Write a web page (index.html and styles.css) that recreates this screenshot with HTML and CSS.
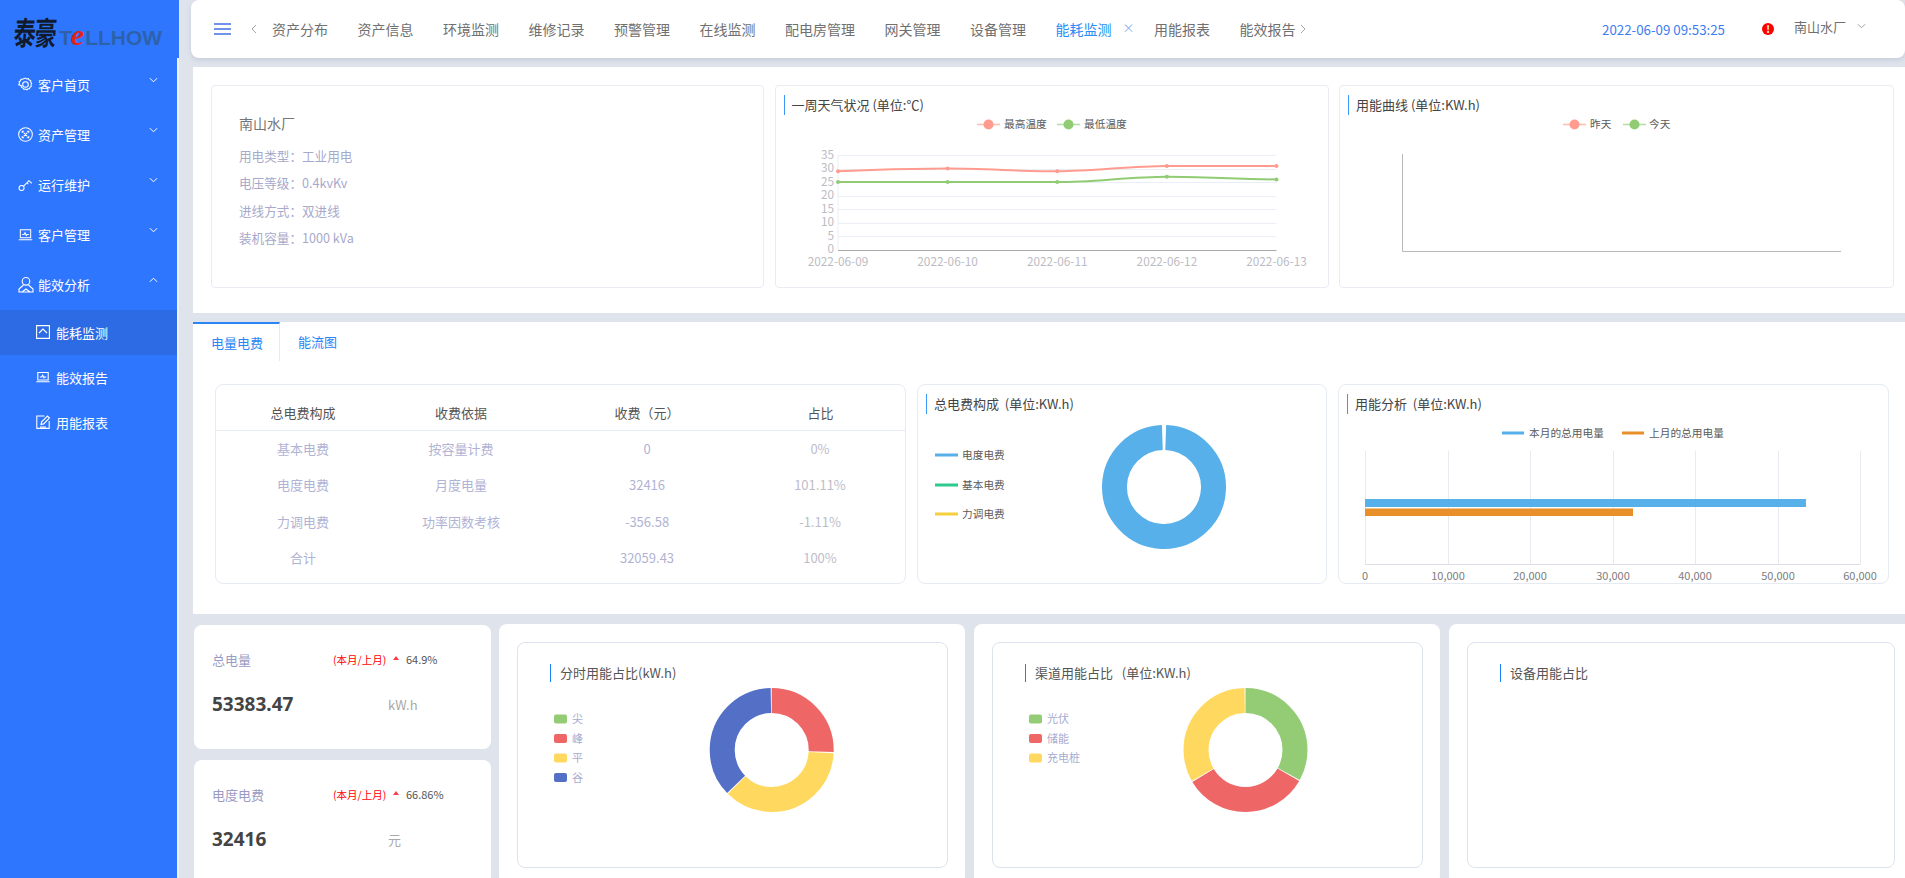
FILE: index.html
```html
<!DOCTYPE html>
<html lang="zh-CN">
<head>
<meta charset="utf-8">
<title>能耗监测</title>
<link rel="stylesheet" href="styles.css">
</head>
<body>
<aside class="side">
  <div class="logo">
    <span class="logo-cn"><span class="cn-a">泰</span><span class="cn-b">豪</span></span>
    <span class="logo-en">T<i>e</i>LLHOW</span>
  </div>
  <nav class="menu">
    <a class="menu-item"><svg class="ico" viewBox="0 0 16 16"><path d="M8 1.2l1.4.9 1.7-.3.9 1.4 1.6.6-.1 1.7 1.1 1.3-.8 1.5.4 1.6-1.4 1-.5 1.6-1.7.1-1.2 1.2-1.4-.9-1.7.3-.9-1.4-1.6-.6.1-1.7L.8 8.2l.8-1.5-.4-1.6 1.4-1 .5-1.6 1.7-.1z"/><circle cx="8" cy="8" r="3"/></svg><span>客户首页</span><svg class="chev" viewBox="0 0 10 6"><path d="M1 1l4 4 4-4"/></svg></a>
    <a class="menu-item"><svg class="ico" viewBox="0 0 16 16"><circle cx="8" cy="8" r="7.300"/><path d="M4.500 6.500V4.500h2M11.500 6.500V4.500h-2M4.500 9.500v2h2M11.500 9.500v2h-2M6 6l4 4M10 6l-4 4"/></svg><span>资产管理</span><svg class="chev" viewBox="0 0 10 6"><path d="M1 1l4 4 4-4"/></svg></a>
    <a class="menu-item"><svg class="ico" viewBox="0 0 16 16"><circle cx="3.800" cy="11.800" r="2.700"/><path d="M5.700 9.900l6-6 3 2.800M9.500 6.100l1.500 1.500"/></svg><span>运行维护</span><svg class="chev" viewBox="0 0 10 6"><path d="M1 1l4 4 4-4"/></svg></a>
    <a class="menu-item"><svg class="ico" viewBox="0 0 16 16"><path d="M2.500 3h11v8.500h-11zM.8 13.500h14.400M4.500 8h2l1-2 1.300 3 .9-1h1.800"/></svg><span>客户管理</span><svg class="chev" viewBox="0 0 10 6"><path d="M1 1l4 4 4-4"/></svg></a>
    <a class="menu-item"><svg class="ico ico-lg" viewBox="0 0 16 16"><circle cx="8" cy="4.800" r="3.800"/><path d="M5.500 8.500L1 12.500v3h14v-3l-4.500-4M4 15.500l4-3 4 3"/></svg><span>能效分析</span><svg class="chev" viewBox="0 0 10 6"><path d="M1 5l4-4 4 4"/></svg></a>
    <a class="sub-item is-active"><svg class="ico-sm" viewBox="0 0 14 14"><path d="M.6.600h12.800v12.800H.6zM3 8l4-4 4 4"/></svg><span>能耗监测</span></a>
    <a class="sub-item"><svg class="ico-sm" viewBox="0 0 14 14"><path d="M1.800 2.500h10.400v7.500H1.800zM.3 11.800h13.400M3.800 7h2l.9-1.800 1.200 2.600.8-.8h1.600"/></svg><span>能效报告</span></a>
    <a class="sub-item"><svg class="ico-sm" viewBox="0 0 14 14"><path d="M8.500 1H.8v12.400h12.400V6M5 9.500l.6-2.600L11.500 1l2 2-5.900 5.900zM4 12h6"/></svg><span>用能报表</span></a>
  </nav>
</aside>

<main class="content">
  <header class="topbar">
    <svg class="burger" viewBox="0 0 17 12"><path d="M0 1h17M0 6h17M0 11h17"/></svg>
    <svg class="nav-arrow" viewBox="0 0 6 10"><path d="M5 1L1 5l4 4"/></svg>
    <ul class="tabs-nav">
      <li>资产分布</li><li>资产信息</li><li>环境监测</li><li>维修记录</li><li>预警管理</li><li>在线监测</li><li>配电房管理</li><li>网关管理</li><li>设备管理</li>
      <li class="nav-on">能耗监测<span class="nav-x">×</span></li><li>用能报表</li><li>能效报告</li>
    </ul>
    <svg class="nav-arrow nav-arrow-r" viewBox="0 0 6 10"><path d="M1 1l4 4-4 4"/></svg>
    <div class="top-right">
      <time class="clock">2022-06-09 09:53:25</time>
      <span class="alert">!</span>
      <span class="plant">南山水厂</span>
      <svg class="plant-chev" viewBox="0 0 10 6"><path d="M1 1l4 4 4-4"/></svg>
    </div>
  </header>

  <section class="panel panel-top">
    <div class="card info">
      <h2>南山水厂</h2>
      <p>用电类型：工业用电</p>
      <p>电压等级：0.4kvKv</p>
      <p>进线方式：双进线</p>
      <p>装机容量：1000 kVa</p>
    </div>
    <div class="card">
      <h3 class="ctitle">一周天气状况 (单位:℃)</h3>
      <svg class="chart" width="552" height="172" viewBox="0 0 552 172">
        <g class="grid">
          <path d="M62 40.500h438.500M62 54.500h438.500M62 67.500h438.500M62 81.500h438.500M62 94.500h438.500M62 108.500h438.500M62 121.500h438.500M62 40v95"/>
        </g>
        <path class="axis" d="M62 135.500h438.500"/>
        <path class="ln hi" d="M201 9.500h23"/><circle class="dot-hi" cx="212.500" cy="9.500" r="5"/>
        <text class="lg" x="228" y="13">最高温度</text>
        <path class="ln lo" d="M281 9.500h23"/><circle class="dot-lo" cx="292.500" cy="9.500" r="5"/>
        <text class="lg" x="308" y="13">最低温度</text>
        <g class="ticks" text-anchor="end">
          <text x="58" y="43.500">35</text><text x="58" y="57">30</text><text x="58" y="70.500">25</text><text x="58" y="84">20</text><text x="58" y="97.500">15</text><text x="58" y="111">10</text><text x="58" y="124.500">5</text><text x="58" y="138">0</text>
        </g>
        <g class="ticks" text-anchor="middle">
          <text x="62" y="151">2022-06-09</text><text x="171.600" y="151">2022-06-10</text><text x="281.250" y="151">2022-06-11</text><text x="390.900" y="151">2022-06-12</text><text x="500.500" y="151">2022-06-13</text>
        </g>
        <path class="curve hi" d="M62 56.300C98 54.500 135 53.600 171.600 53.600C208 53.600 245 56.300 281.250 56.300C318 56.300 354 50.900 390.900 50.900C427 50.900 464 50.900 500.500 50.900"/>
        <path class="curve lo" d="M62 67.100L281.250 67.100C318 67.100 354 61.700 390.900 61.700C427 61.700 464 64.400 500.500 64.400"/>
        <g class="dot-hi"><circle cx="62" cy="56.300" r="2"/><circle cx="171.600" cy="53.600" r="2"/><circle cx="281.250" cy="56.300" r="2"/><circle cx="390.900" cy="50.900" r="2"/><circle cx="500.500" cy="50.900" r="2"/></g>
        <g class="dot-lo"><circle cx="62" cy="67.100" r="2"/><circle cx="171.600" cy="67.100" r="2"/><circle cx="281.250" cy="67.100" r="2"/><circle cx="390.900" cy="61.700" r="2"/><circle cx="500.500" cy="64.400" r="2"/></g>
      </svg>
    </div>
    <div class="card">
      <h3 class="ctitle">用能曲线 (单位:KW.h)</h3>
      <svg class="chart" width="552" height="172" viewBox="0 0 552 172">
        <path class="ln hi" d="M223 9.500h23"/><circle class="dot-hi" cx="234.500" cy="9.500" r="5"/>
        <text class="lg" x="250" y="13">昨天</text>
        <path class="ln lo" d="M283 9.500h23"/><circle class="dot-lo" cx="294.500" cy="9.500" r="5"/>
        <text class="lg" x="309" y="13">今天</text>
        <path class="axis axis-soft" d="M62.500 39v97.500H501"/>
      </svg>
    </div>
  </section>

  <section class="panel panel-mid">
    <div class="tabbar">
      <span class="tab tab-on">电量电费</span>
      <span class="tab">能流图</span>
    </div>
    <div class="mid-row">
      <div class="card card-r">
        <table class="fee">
          <colgroup><col class="c1"><col class="c2"><col class="c3"><col class="c4"></colgroup>
          <thead><tr><th>总电费构成</th><th>收费依据</th><th>收费（元）</th><th>占比</th></tr></thead>
          <tbody>
            <tr><td>基本电费</td><td>按容量计费</td><td>0</td><td class="pct">0%</td></tr>
            <tr><td>电度电费</td><td>月度电量</td><td>32416</td><td class="pct">101.11%</td></tr>
            <tr><td>力调电费</td><td>功率因数考核</td><td>-356.58</td><td class="pct">-1.11%</td></tr>
            <tr><td>合计</td><td></td><td>32059.43</td><td class="pct">100%</td></tr>
          </tbody>
        </table>
      </div>
      <div class="card card-r">
        <h3 class="ctitle">总电费构成&nbsp;&nbsp;(单位:KW.h)</h3>
        <svg class="chart" width="408" height="168" viewBox="0 0 408 168">
          <path class="lgl l-blue" d="M17 40h23"/><text class="lg" x="44" y="43.500">电度电费</text>
          <path class="lgl l-green" d="M17 70h23"/><text class="lg" x="44" y="73.500">基本电费</text>
          <path class="lgl l-yellow" d="M17 99h23"/><text class="lg" x="44" y="102.500">力调电费</text>
          <circle class="ring r-sky" cx="246" cy="72" r="49.500" pathLength="360" stroke-dasharray="356 4" transform="rotate(-88 246 72)"/>
        </svg>
      </div>
      <div class="card card-r">
        <h3 class="ctitle">用能分析&nbsp;&nbsp;(单位:KW.h)</h3>
        <svg class="chart" width="549" height="168" viewBox="0 0 549 168">
          <path class="lgl l-blue" d="M163 18h22"/><text class="lg" x="190" y="21.500">本月的总用电量</text>
          <path class="lgl l-orange" d="M283 18h22"/><text class="lg" x="310" y="21.500">上月的总用电量</text>
          <path class="vgrid" d="M26.500 36v113M109.500 36v113M191.500 36v113M274.500 36v113M356.500 36v113M439.500 36v113M521.500 36v113"/>
          <path class="vaxis" d="M26 149.500h495.500"/>
          <rect class="b-blue" x="26" y="84" width="441" height="8"/>
          <rect class="b-orange" x="26" y="93.500" width="268" height="7.500"/>
          <g class="ticks2" text-anchor="middle">
            <text x="26" y="165">0</text><text x="109" y="165">10,000</text><text x="191" y="165">20,000</text><text x="274" y="165">30,000</text><text x="356" y="165">40,000</text><text x="439" y="165">50,000</text><text x="521" y="165">60,000</text>
          </g>
        </svg>
      </div>
    </div>
  </section>

  <section class="bottom">
    <div class="stats">
      <div class="stat">
        <div class="stat-top"><span class="stat-name">总电量</span><span class="stat-red">(本月/上月)</span><span class="tri"></span><span class="stat-pct">64.9%</span></div>
        <div class="stat-main"><strong>53383.47</strong><span>kW.h</span></div>
      </div>
      <div class="stat">
        <div class="stat-top"><span class="stat-name">电度电费</span><span class="stat-red">(本月/上月)</span><span class="tri"></span><span class="stat-pct">66.86%</span></div>
        <div class="stat-main"><strong>32416</strong><span>元</span></div>
      </div>
    </div>
    <div class="big">
      <div class="card inner">
        <h3 class="ctitle2">分时用能占比(kW.h)</h3>
        <svg class="chart" width="429" height="185" viewBox="0 0 429 185">
          <rect class="sw s-green" x="36" y="32.500" width="13" height="9" rx="2"/><text class="pl" x="54" y="41">尖</text>
          <rect class="sw s-red" x="36" y="52" width="13" height="9" rx="2"/><text class="pl" x="54" y="60.500">峰</text>
          <rect class="sw s-yellow" x="36" y="71.500" width="13" height="9" rx="2"/><text class="pl" x="54" y="80">平</text>
          <rect class="sw s-blue" x="36" y="91" width="13" height="9" rx="2"/><text class="pl" x="54" y="99.500">谷</text>
          <g transform="rotate(-90 253.700 68)">
            <circle class="ring r-red" cx="253.700" cy="68" r="49.500" pathLength="360" stroke-dasharray="92 268" stroke-dashoffset="0"/>
            <circle class="ring r-yellow" cx="253.700" cy="68" r="49.500" pathLength="360" stroke-dasharray="132 228" stroke-dashoffset="-93"/>
            <circle class="ring r-blue" cx="253.700" cy="68" r="49.500" pathLength="360" stroke-dasharray="133 227" stroke-dashoffset="-226"/>
          </g>
        </svg>
      </div>
    </div>
    <div class="big">
      <div class="card inner">
        <h3 class="ctitle2">渠道用能占比&nbsp;&nbsp;&nbsp;(单位:KW.h)</h3>
        <svg class="chart" width="429" height="185" viewBox="0 0 429 185">
          <rect class="sw s-green" x="36" y="32.500" width="13" height="9" rx="2"/><text class="pl" x="54" y="41">光伏</text>
          <rect class="sw s-red" x="36" y="52" width="13" height="9" rx="2"/><text class="pl" x="54" y="60.500">储能</text>
          <rect class="sw s-yellow" x="36" y="71.500" width="13" height="9" rx="2"/><text class="pl" x="54" y="80">充电桩</text>
          <g transform="rotate(-90 252.500 68)">
            <circle class="ring r-green" cx="252.500" cy="68" r="49.500" pathLength="360" stroke-dasharray="119 241" stroke-dashoffset="0"/>
            <circle class="ring r-red" cx="252.500" cy="68" r="49.500" pathLength="360" stroke-dasharray="119 241" stroke-dashoffset="-120"/>
            <circle class="ring r-yellow" cx="252.500" cy="68" r="49.500" pathLength="360" stroke-dasharray="119 241" stroke-dashoffset="-240"/>
          </g>
        </svg>
      </div>
    </div>
    <div class="big big-last">
      <div class="card inner">
        <h3 class="ctitle2">设备用能占比</h3>
      </div>
    </div>
  </section>
</main>
</body>
</html>
```
FILE: styles.css
```css
* { box-sizing: border-box; }
html, body { margin: 0; height: 100%; }
body {
  display: flex;
  overflow: hidden;
  background: #dfe4ec;
  font-family: "Noto Sans CJK SC", "Noto Sans", sans-serif;
  font-size: 13px;
  color: #666;
}
h2, h3, p, ul { margin: 0; padding: 0; font-weight: 400; }
svg { display: block; }

/* Sidebar */
.side {
  flex: 0 0 179px;
  min-width: 0;
  height: 100%;
  background: #2f76ff;
  border-right: 2px solid #eef1f5;
  color: #fff;
}
.logo {
  display: flex;
  align-items: flex-end;
  width: 179px;
  height: 58px;
  padding: 0 0 10px 14px;
  background: #2f76ff;
}
.logo-cn { display: flex; color: #111a2c; font-weight: 700; font-size: 22px; line-height: 36px; width: 45px; flex: none; }
.cn-a { transform: scaleY(1.45) skewX(-6deg); }
.cn-b { transform: scaleY(1.45) skewX(-6deg); margin-left: -1px; }
.logo-en { font-family: "Liberation Sans", sans-serif; font-weight: 700; font-size: 21px; line-height: 20px; color: #2d62ab; white-space: nowrap; }
.logo-en i { font-family: "Liberation Serif", serif; font-size: 30px; line-height: 20px; color: #e2231a; margin: 0 1px 0 -1px; }
.menu { margin-top: 1px; }
.menu-item, .sub-item { display: flex; align-items: center; color: #fff; font-size: 13px; }
.menu-item { height: 50.200px; padding-left: 18px; }
.ico { width: 15px; height: 15px; margin-right: 5px; fill: none; stroke: #fff; stroke-width: 1.100; }
.ico-lg { width: 16px; height: 17px; margin-right: 4px; }
.chev { width: 9px; height: 6px; margin-left: auto; margin-right: 19px; margin-bottom: 9px; fill: none; stroke: #fff; stroke-width: 1.100; }
.sub-item { height: 45px; padding-left: 36px; }
.sub-item.is-active { background: #2c6be3; }
.ico-sm { width: 14px; height: 14px; margin-right: 6px; fill: none; stroke: #fff; stroke-width: 1.100; }

/* Main column */
.content { flex: 1; min-width: 0; height: 100%; margin-left: 12px; }
.topbar {
  display: flex;
  align-items: center;
  height: 58px;
  padding-left: 23px;
  background: #fff;
  border-radius: 8px;
  box-shadow: 0 2px 5px rgba(150, 160, 185, .35);
}
.burger { width: 17px; height: 12px; fill: none; stroke: #4170e2; stroke-width: 1.600; }
.nav-arrow { width: 6px; height: 10px; margin-left: 20px; fill: none; stroke: #a6a6a6; stroke-width: 1; }
.tabs-nav { display: flex; gap: 29.500px; margin-left: 15px; list-style: none; font-size: 14px; color: #707070; white-space: nowrap; }
.nav-on { position: relative; padding-right: 13px; color: #2a8cf5; }
.nav-x { position: absolute; left: 67px; top: 0; font-size: 12px; color: #8fb4f5; }
.nav-arrow-r { margin-left: 4px; }
.top-right { display: flex; align-items: center; margin-left: auto; padding-right: 39px; }
.clock { font-size: 13.300px; color: #3c7df2; margin-right: 37px; }
.alert {
  width: 12px; height: 12px;
  margin-right: 20px;
  border-radius: 50%;
  background: #f00;
  color: #fff;
  font-size: 10px;
  font-weight: 700;
  line-height: 12px;
  text-align: center;
}
.plant { font-size: 13px; color: #6f6f6f; margin-right: 11px; margin-bottom: 5px; }
.plant-chev { width: 9px; height: 6px; margin-bottom: 6px; fill: none; stroke: #999; stroke-width: 1; }

.panel { margin-left: 2px; background: #fff; }
.card { background: #fff; border: 1px solid #eaecf4; border-radius: 4px; }
.panel-top {
  display: grid;
  grid-template-columns: 553px 554px 555px;
  column-gap: 10.500px;
  height: 246px;
  margin-top: 9px;
  padding: 18px 0 0 18px;
}
.panel-top .card { height: 203px; }
.info { padding: 27px 0 0 27px; color: #a7a9cb; }
.info h2 { font-size: 14px; line-height: 20px; color: #757575; margin-bottom: 9px; }
.info p { font-size: 12.600px; line-height: 27.300px; }

.ctitle {
  height: 20px;
  margin: 9px 0 0 8px;
  padding-left: 7px;
  border-left: 1px solid #3b97f5;
  font-size: 13px;
  line-height: 20px;
  color: #444;
}
.chart text { font-family: "Noto Sans CJK SC", "Noto Sans", sans-serif; }
.grid path { fill: none; stroke: #eceef6; stroke-width: 1; }
.axis { fill: none; stroke: #aaa; stroke-width: 1; }
.axis-soft { stroke: #b8b8b8; }
.ln { fill: none; stroke-width: 1.600; opacity: .65; }
.hi { stroke: #ff9c8f; }
.lo { stroke: #91cc75; }
.dot-hi { fill: #ff9c8f; }
.dot-lo { fill: #91cc75; }
.lg { font-size: 10.700px; fill: #5a5a5a; }
.ticks text { font-size: 11.800px; fill: #bcbcc4; }
.ticks2 text { font-size: 11px; fill: #7d7d7d; }
.curve { fill: none; stroke-width: 2; }

.panel-mid { height: 292px; margin-top: 9px; }
.tabbar { display: flex; height: 39px; font-size: 13px; color: #2a86f5; white-space: nowrap; }
.tab { padding: 0 18px; line-height: 39px; }
.tab-on { width: 87px; border-top: 2px solid #2a86f5; border-right: 1px solid #e6e9f0; line-height: 37px; }
.mid-row {
  display: grid;
  grid-template-columns: 691px 410px 551px;
  column-gap: 11px;
  height: 200px;
  margin: 23px 0 0 22px;
}
.card-r { border-color: #e6eaf3; border-radius: 8px; overflow: hidden; }
.card-r .chart { margin-top: 1px; }
.fee { width: 100%; table-layout: fixed; border-collapse: collapse; font-size: 13px; color: #b1b3d5; text-align: center; }
.c1 { width: 174px; }
.c2 { width: 142px; }
.c3 { width: 230px; }
.fee th { height: 45px; padding-top: 11px; border-bottom: 1px solid #e6eaf3; font-weight: 400; color: #555; }
.fee th:last-child, .fee td:last-child { padding-right: 27px; }
.fee td { height: 36.300px; padding: 1px 0 0; }
.fee td.pct { color: #bdbdca; }
.lgl { fill: none; stroke-width: 3; }
.l-blue { stroke: #58b0ea; }
.l-green { stroke: #2ec98d; }
.l-yellow { stroke: #f5cf3d; }
.l-orange { stroke: #e88f2a; }
.ring { fill: none; stroke-width: 25; }
.r-sky { stroke: #58b0ea; }
.r-red { stroke: #ee6666; }
.r-yellow { stroke: #ffd95f; }
.r-blue { stroke: #5470c6; }
.r-green { stroke: #93cc75; }
.vgrid { fill: none; stroke: #e8eaef; stroke-width: 1; }
.vaxis { fill: none; stroke: #dcdfe6; stroke-width: 1; }
.b-blue { fill: #58b0ea; }
.b-orange { fill: #e88f2a; }

/* Bottom row */
.bottom { display: flex; gap: 9px; margin: 10px 0 0 3px; }
.stats { flex: 0 0 297px; display: flex; flex-direction: column; gap: 11px; margin-right: -1px; padding-top: 1px; }
.stat { height: 124px; padding: 23px 0 0 18px; background: #fff; border-radius: 8px; }
.stat:last-child { height: 140px; }
.stat-top { display: flex; align-items: center; height: 22px; }
.stat-name { width: 121px; font-size: 13px; color: #9a9cc4; }
.stat-red { width: 54px; font-size: 10.500px; color: #f00; white-space: nowrap; }
.tri { width: 0; height: 0; margin: 0 7px 2px 6px; border: 3px solid transparent; border-top: 0; border-bottom: 4px solid #ff3b4e; }
.stat-pct { font-size: 11px; color: #555; }
.stat-main { display: flex; align-items: center; height: 22px; margin-top: 23px; }
.stat-main strong { width: 176px; font-family: "Noto Sans", sans-serif; font-size: 19px; font-weight: 700; color: #444; }
.stat-main span { font-size: 13px; color: #a9a9a9; }
.big { flex: 0 0 466px; height: 260px; padding: 18px 17px 0 18px; background: #fff; border-radius: 8px; }
.big-last { padding-right: 20px; }
.inner { height: 226px; border-color: #dde3ee; border-radius: 8px; }
.ctitle2 {
  height: 18px;
  margin: 21px 0 0 32px;
  padding-left: 9px;
  border-left: 1px solid #1a82f5;
  font-size: 13px;
  line-height: 18px;
  color: #555;
}
.sw { stroke: none; }
.s-green { fill: #93cc75; }
.s-red { fill: #ee6666; }
.s-yellow { fill: #ffd95f; }
.s-blue { fill: #5470c6; }
.pl { font-size: 11px; fill: #a9acd0; }
```
